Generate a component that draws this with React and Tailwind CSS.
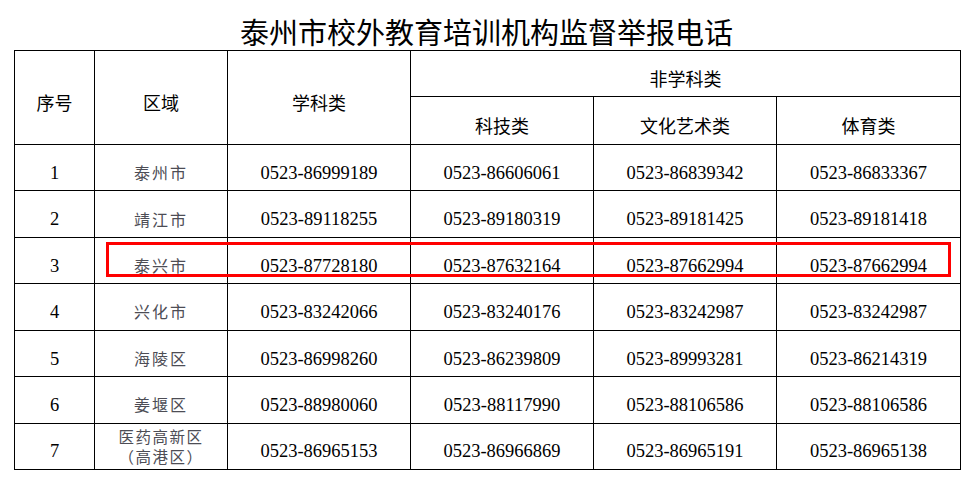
import React from 'react';

const rows = [
  { no: '1', area: ['泰州市'], subject: '0523-86999189', tech: '0523-86606061', art: '0523-86839342', sport: '0523-86833367' },
  { no: '2', area: ['靖江市'], subject: '0523-89118255', tech: '0523-89180319', art: '0523-89181425', sport: '0523-89181418' },
  { no: '3', area: ['泰兴市'], subject: '0523-87728180', tech: '0523-87632164', art: '0523-87662994', sport: '0523-87662994' },
  { no: '4', area: ['兴化市'], subject: '0523-83242066', tech: '0523-83240176', art: '0523-83242987', sport: '0523-83242987' },
  { no: '5', area: ['海陵区'], subject: '0523-86998260', tech: '0523-86239809', art: '0523-89993281', sport: '0523-86214319' },
  { no: '6', area: ['姜堰区'], subject: '0523-88980060', tech: '0523-88117990', art: '0523-88106586', sport: '0523-88106586' },
  { no: '7', area: ['医药高新区', '（高港区）'], subject: '0523-86965153', tech: '0523-86966869', art: '0523-86965191', sport: '0523-86965138' },
];

const sans = "font-['Noto_Sans_CJK_SC','Noto_Sans',sans-serif]";
const serif = "font-['Liberation_Serif','Noto_Sans_CJK_SC',serif]";

function Head({ children, ...props }) {
  return (
    <th
      {...props}
      className={`border border-black p-0 pt-[9px] align-middle text-center text-[18px] font-normal leading-none text-black ${sans}`}
    >
      {children}
    </th>
  );
}

function Num({ children }) {
  return (
    <td className={`border border-black p-0 pt-[11px] align-middle text-center text-[18.5px] leading-none text-black ${serif}`}>
      {children}
    </td>
  );
}

export default function App() {
  return (
    <div className="w-[973px] h-[487px] bg-white overflow-hidden">
      <h1 className={`h-[50px] pt-[17px] text-center text-[29px] leading-none font-normal text-black ${sans}`}>
        泰州市校外教育培训机构监督举报电话
      </h1>

      <div className="relative ml-[14px] w-[946px]">
        <table className="w-full table-fixed border-collapse">
          <colgroup>
            <col className="w-[80px]" />
            <col className="w-[133px]" />
            <col className="w-[183px]" />
            <col className="w-[183px]" />
            <col className="w-[183px]" />
            <col className="w-[184px]" />
          </colgroup>
          <thead>
            <tr className="h-[46px]">
              <Head rowSpan={2}>序号</Head>
              <Head rowSpan={2}>区域</Head>
              <Head rowSpan={2}>学科类</Head>
              <Head colSpan={3}>非学科类</Head>
            </tr>
            <tr className="h-[48px]">
              <Head>科技类</Head>
              <Head>文化艺术类</Head>
              <Head>体育类</Head>
            </tr>
          </thead>
          <tbody>
            {rows.map(r => (
              <tr key={r.no} className="h-[46.43px]">
                <Num>{r.no}</Num>
                <td className={`border border-black p-0 pt-[9px] align-middle text-center text-[16px] font-normal text-[#4d4d55] ${sans}`}>
                  {r.area.length === 1 ? (
                    <span className="tracking-[2px] leading-none">{r.area[0]}</span>
                  ) : (
                    <div className="-mt-[9px] flex flex-col items-center text-[15.5px] leading-[20px] tracking-[1.5px]">
                      <span>{r.area[0]}</span>
                      <span>{r.area[1]}</span>
                    </div>
                  )}
                </td>
                <Num>{r.subject}</Num>
                <Num>{r.tech}</Num>
                <Num>{r.art}</Num>
                <Num>{r.sport}</Num>
              </tr>
            ))}
          </tbody>
        </table>

        {/* highlight on the 泰兴市 row */}
        <div className="pointer-events-none absolute left-[92px] top-[192px] w-[845px] h-[35px] border-[3.5px] border-[#ff0000]" />
      </div>
    </div>
  );
}
